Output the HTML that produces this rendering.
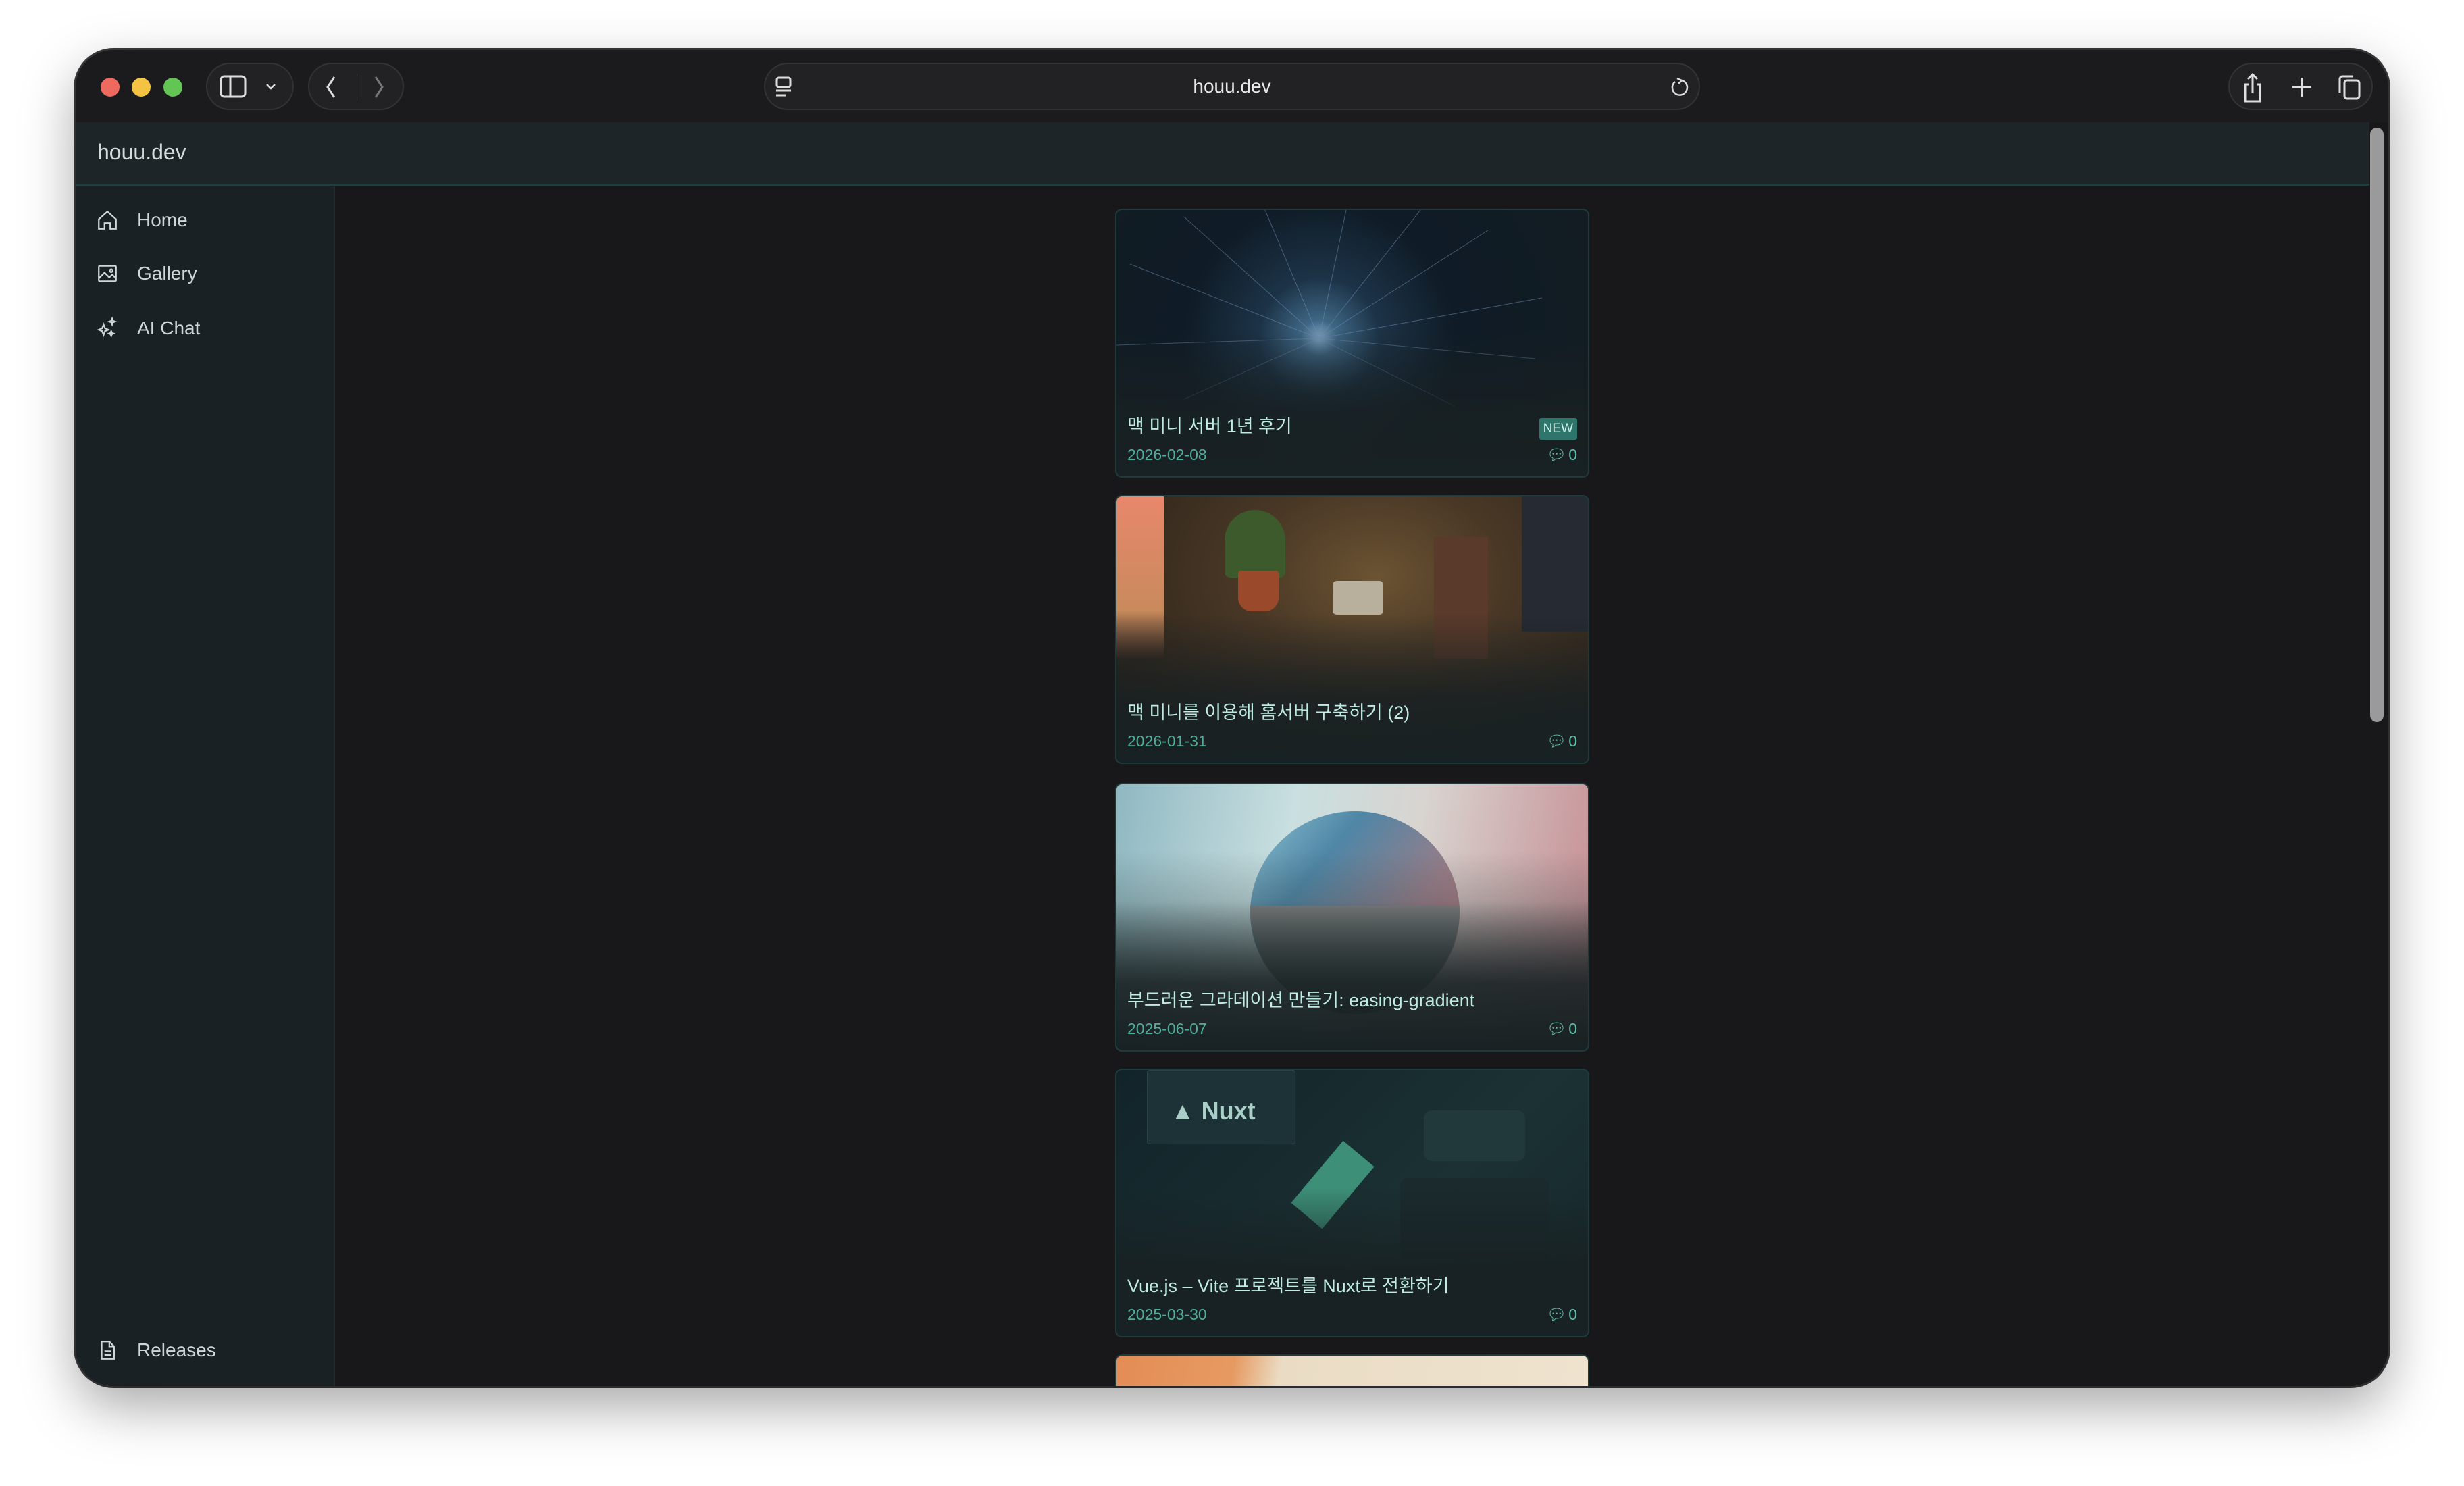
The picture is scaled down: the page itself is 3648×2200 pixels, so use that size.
<!DOCTYPE html>
<html><head><meta charset="utf-8"><style>
*{margin:0;padding:0;box-sizing:border-box}
html,body{width:3648px;height:2200px;overflow:hidden}
body{background:#fff;position:relative;font-family:"Liberation Sans","Noto Sans CJK KR",sans-serif}
.win{position:absolute;left:112px;top:74px;width:3424px;height:1978px;border-radius:56px;background:#18181a;overflow:hidden;box-shadow:0 30px 80px rgba(0,0,0,.35),0 0 0 3px #3a3a3c}
.tb{position:absolute;left:0;top:0;width:100%;height:107px;background:#1b1b1d}
.dot{position:absolute;top:41px;width:28px;height:28px;border-radius:50%}
.grp{position:absolute;top:19px;height:70px;border-radius:35px;background:#222225;border:2px solid #333336}
.hdr{position:absolute;left:0;top:107px;width:3396px;height:94px;background:#1e2528;border-bottom:3px solid #1f3d3c}
.hdr span{position:absolute;left:32px;top:26px;font-size:32px;color:#d6dbdc}
.side{position:absolute;left:0;top:201px;width:384px;height:1777px;background:#1a2124;border-right:2px solid #1f2a2c}
.it{position:absolute;left:30px;height:40px;display:flex;align-items:center;color:#d0d6d8;font-size:28px}
.it svg{width:34px;height:34px;margin-right:27px}
.card{position:absolute;left:1539px;width:702px;height:398px;border-radius:10px;border:2px solid #1f3a3a;overflow:hidden}
.ov{position:absolute;left:0;right:0;bottom:0;height:220px;background:linear-gradient(to bottom,rgba(24,32,34,0),rgba(24,32,34,.85) 55%,#182123)}
.t{position:absolute;left:16px;bottom:57px;font-size:27px;color:#bfece2;white-space:nowrap}
.d{position:absolute;left:16px;bottom:18px;font-size:23px;color:#4fae9c}
.c{position:absolute;right:16px;bottom:18px;font-size:23px;color:#5cc0ac;display:flex;align-items:center;gap:3px}
.new{position:absolute;right:16px;bottom:54px;background:#2e756c;color:#cfeee8;font-size:19px;padding:5px 6px;border-radius:3px}
.sb{position:absolute;left:3397px;top:115px;width:20px;height:880px;border-radius:10px;background:#9a9a9a}
</style></head><body>
<div class="win">
 <div class="tb">
  <div class="dot" style="left:37px;background:#ee6a5f"></div>
  <div class="dot" style="left:83px;background:#f5c344"></div>
  <div class="dot" style="left:130px;background:#62c554"></div>
  <div class="grp" style="left:193px;width:130px">
   <svg style="position:absolute;left:18px;top:16px" width="40" height="34" viewBox="0 0 40 34"><rect x="2" y="2" width="36" height="30" rx="5" fill="none" stroke="#ddd" stroke-width="3"/><line x1="16" y1="2" x2="16" y2="32" stroke="#ddd" stroke-width="3"/></svg>
   <svg style="position:absolute;left:85px;top:26px" width="18" height="14" viewBox="0 0 18 14"><path d="M3 4l6 6 6-6" fill="none" stroke="#ddd" stroke-width="2.5"/></svg>
  </div>
  <div class="grp" style="left:344px;width:142px">
   <svg style="position:absolute;left:22px;top:16px" width="20" height="36" viewBox="0 0 20 36"><path d="M15 3L5 18l10 15" fill="none" stroke="#ddd" stroke-width="3"/></svg>
   <div style="position:absolute;left:70px;top:14px;width:1px;height:40px;background:#3a3a3d"></div>
   <svg style="position:absolute;left:93px;top:16px" width="20" height="36" viewBox="0 0 20 36"><path d="M5 3l10 15L5 33" fill="none" stroke="#777" stroke-width="3"/></svg>
  </div>
  <div class="grp" style="left:1019px;width:1386px">
   <svg style="position:absolute;left:14px;top:18px" width="26" height="32" viewBox="0 0 26 32"><rect x="3" y="2" width="20" height="14" rx="3" fill="none" stroke="#ddd" stroke-width="3"/><line x1="2" y1="21" x2="24" y2="21" stroke="#ddd" stroke-width="3"/><line x1="2" y1="28" x2="16" y2="28" stroke="#ddd" stroke-width="3"/></svg>
   <div style="position:absolute;left:0;right:0;top:17px;text-align:center;color:#e8e8e8;font-size:28px">houu.dev</div>
   <svg style="position:absolute;right:14px;top:18px" width="30" height="34" viewBox="0 0 30 34"><path d="M19 6A11 11 0 1 1 9 8" fill="none" stroke="#ddd" stroke-width="2.5"/><path d="M12 3l7 3-5 5" fill="none" stroke="#ddd" stroke-width="2.5"/></svg>
  </div>
  <div class="grp" style="left:3187px;width:214px">
   <svg style="position:absolute;left:18px;top:12px" width="32" height="46" viewBox="0 0 32 46"><path d="M10 18H5v25h22V18h-5M16 3v28M9 10l7-7 7 7" fill="none" stroke="#ddd" stroke-width="3"/></svg>
   <svg style="position:absolute;left:90px;top:17px" width="34" height="34" viewBox="0 0 34 34"><path d="M17 3v28M3 17h28" stroke="#ddd" stroke-width="3"/></svg>
   <svg style="position:absolute;left:158px;top:14px" width="38" height="40" viewBox="0 0 38 40"><rect x="12" y="10" width="22" height="27" rx="4" fill="none" stroke="#ddd" stroke-width="3"/><path d="M5 28V8a4 4 0 0 1 4-4h16" fill="none" stroke="#ddd" stroke-width="3"/></svg>
  </div>
 </div>
 <div class="hdr"><span>houu.dev</span></div>
 <div class="side">
  <div class="it" style="top:31px"><svg viewBox="0 0 24 24" fill="none" stroke="#d0d6d8" stroke-width="1.6"><path d="M3 11L12 3l9 8v10h-6v-6h-6v6H3z"/></svg>Home</div>
  <div class="it" style="top:110px"><svg viewBox="0 0 24 24" fill="none" stroke="#d0d6d8" stroke-width="1.6"><rect x="3" y="4" width="18" height="16" rx="1"/><path d="M3 17l6-6 5 5 3-3 4 4"/><circle cx="16" cy="9" r="1.5"/></svg>Gallery</div>
  <div class="it" style="top:191px"><svg viewBox="0 0 24 24" fill="none" stroke="#d0d6d8" stroke-width="1.6"><path d="M8 8l1.5 4L13 13.5 9.5 15 8 19l-1.5-4L3 13.5 6.5 12z"/><path d="M17 2l.8 2.2L20 5l-2.2.8L17 8l-.8-2.2L14 5l2.2-.8z"/><path d="M16 15l.7 1.8 1.8.7-1.8.7L16 20l-.7-1.8-1.8-.7 1.8-.7z"/></svg>AI Chat</div>
  <div class="it" style="top:1704px"><svg viewBox="0 0 24 24" fill="none" stroke="#d0d6d8" stroke-width="1.6"><path d="M6 3h8l5 5v13H6z"/><path d="M14 3v5h5M9 13h7M9 17h7"/></svg>Releases</div>
 </div>
 <div class="sb"></div>

 <div class="card" style="top:235px;background:radial-gradient(circle at 43% 48%,#7fa5c4 0,#3e6684 6%,#1c3347 20%,#0f1b26 45%,#121c22 100%)">
  <svg width="702" height="398" style="position:absolute;left:0;top:0" stroke="#6f8fb0" stroke-width="1" opacity=".55"><g transform="translate(300,190)"><line x1="0" y1="0" x2="-280" y2="-110"/><line x1="0" y1="0" x2="-200" y2="-180"/><line x1="0" y1="0" x2="-80" y2="-190"/><line x1="0" y1="0" x2="40" y2="-190"/><line x1="0" y1="0" x2="150" y2="-190"/><line x1="0" y1="0" x2="250" y2="-160"/><line x1="0" y1="0" x2="330" y2="-60"/><line x1="0" y1="0" x2="-300" y2="10"/><line x1="0" y1="0" x2="320" y2="30"/><line x1="0" y1="0" x2="-200" y2="90"/><line x1="0" y1="0" x2="200" y2="100"/></g></svg>
  <div class="ov"></div>
  <div class="t">맥 미니 서버 1년 후기</div><div class="new">NEW</div>
  <div class="d">2026-02-08</div><div class="c">💬︎<span>0</span></div>
 </div>

 <div class="card" style="top:659px;background:radial-gradient(ellipse at 55% 30%,#6b5332 0,#4a3826 35%,#35291d 70%,#261f18 100%)">
  <div style="position:absolute;left:0;top:0;width:70px;height:240px;background:linear-gradient(#e8876c,#c98a5c 70%,#3a2a20)"></div>
  <div style="position:absolute;left:600px;top:0;width:102px;height:200px;background:#262a32"></div>
  <div style="position:absolute;left:320px;top:125px;width:75px;height:50px;background:#b8af9c;border-radius:6px"></div>
  <div style="position:absolute;left:160px;top:20px;width:90px;height:100px;background:#3d5a2c;border-radius:45px 45px 8px 8px"></div>
  <div style="position:absolute;left:180px;top:110px;width:60px;height:60px;background:#9a4a2a;border-radius:4px 4px 20px 20px"></div>
  <div style="position:absolute;left:470px;top:60px;width:80px;height:180px;background:#5a3a2a"></div>
  <div class="ov"></div>
  <div class="t">맥 미니를 이용해 홈서버 구축하기 (2)</div>
  <div class="d">2026-01-31</div><div class="c">💬︎<span>0</span></div>
 </div>

 <div class="card" style="top:1085px;background:linear-gradient(100deg,#8fb8c2 0%,#c9dfe0 35%,#d8d4d0 60%,#c58a90 100%)">
  <div style="position:absolute;left:198px;top:40px;width:310px;height:300px;border-radius:50%;background:linear-gradient(130deg,#8bc0cf 0%,#4f86a6 30%,#9a7d88 65%,#c4737a 100%)"></div>
  <div style="position:absolute;left:198px;top:180px;width:310px;height:160px;border-radius:0 0 155px 155px;background:linear-gradient(#8a8888,#4a5c5c)"></div>
  <div style="position:absolute;left:0;top:0;right:0;bottom:0;background:linear-gradient(to bottom,rgba(0,0,0,0) 25%,rgba(50,65,65,.55) 70%)"></div>
  <div class="ov"></div>
  <div class="t">부드러운 그라데이션 만들기: easing-gradient</div>
  <div class="d">2025-06-07</div><div class="c">💬︎<span>0</span></div>
 </div>

 <div class="card" style="top:1508px;background:linear-gradient(135deg,#12242a,#1b3133 60%,#16282b)">
  <div style="position:absolute;left:45px;top:0;width:220px;height:110px;background:#1d3236;border:1px solid #2a4446;border-radius:4px"></div>
  <div style="position:absolute;left:80px;top:40px;font-size:36px;font-weight:bold;color:#a9cfc8">▲ Nuxt</div>
  <div style="position:absolute;left:290px;top:110px;width:60px;height:120px;background:#3d8f78;transform:rotate(40deg)"></div>
  <div style="position:absolute;left:455px;top:60px;width:150px;height:75px;background:#22393c;border-radius:12px"></div>
  <div style="position:absolute;left:420px;top:160px;width:220px;height:120px;background:#1a2a2d;border-radius:12px"></div>
  <div class="ov"></div>
  <div class="t">Vue.js – Vite 프로젝트를 Nuxt로 전환하기</div>
  <div class="d">2025-03-30</div><div class="c">💬︎<span>0</span></div>
 </div>

 <div class="card" style="top:1931px;height:47px;border-bottom:none;border-radius:10px 10px 0 0;background:linear-gradient(100deg,#e48c55 0%,#e69a62 25%,#eadcc4 35%,#efe3cf 100%)"></div>
</div>
</body></html>
